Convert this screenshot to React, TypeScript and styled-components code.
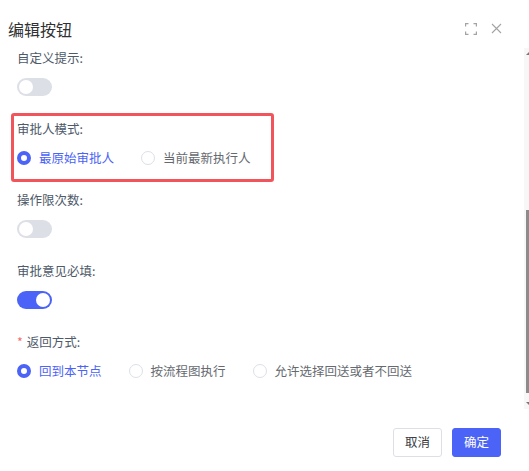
import React from "react";
import styled, { createGlobalStyle, css } from "styled-components";

const BLUE = "#4b63f6";

const Global = createGlobalStyle`
  html, body { margin: 0; padding: 0; background: #fff; }
  body { font-family: "Noto Sans CJK SC", "Noto Sans", sans-serif; }
  *, *::before, *::after { box-sizing: border-box; }
`;

const Dialog = styled.div`
  width: 529px;
  height: 471px;
  display: flex;
  flex-direction: column;
  background: #fff;
  overflow: hidden;
`;

const Header = styled.div`
  height: 48px;
  flex: none;
  display: flex;
  align-items: center;
  justify-content: space-between;
  padding: 9px 27px 0 8px;
`;

const Title = styled.h2`
  margin: 0;
  font-size: 16px;
  font-weight: 400;
  line-height: 20px;
  color: #303133;
`;

const HeaderTools = styled.div`
  display: flex;
  align-items: center;
  gap: 14px;
`;

const ToolButton = styled.span`
  display: inline-flex;
  color: #a3a3a3;
`;

const Body = styled.div`
  position: relative;
  height: 361px;
  flex: none;
  overflow: hidden;
`;

const Content = styled.div`
  padding: 0 0 0 17px;
`;

const ScrollTrack = styled.div`
  position: absolute;
  top: 0;
  right: 0;
  bottom: 0;
  width: 5px;
  background: #f7f7f7;
`;

const ScrollThumb = styled.div`
  position: absolute;
  right: 0;
  top: 162px;
  width: 3px;
  height: 183px;
  background: #8c8c8c;
`;

const ScrollArrow = styled.div<{ $down?: boolean }>`
  position: absolute;
  right: 0;
  width: 0;
  height: 0;
  border-left: 3px solid transparent;
  ${(p) =>
    p.$down
      ? css`
          bottom: 4px;
          border-top: 3px solid #777;
        `
      : css`
          top: 4px;
          border-bottom: 3px solid #777;
        `}
`;

const Item = styled.div<{ $marked?: boolean }>`
  position: relative;
  margin-bottom: 22px;
  ${(p) =>
    p.$marked &&
    css`
      &::after {
        content: "";
        position: absolute;
        left: -6px;
        top: -6px;
        width: 263px;
        height: 69px;
        border: 3px solid #f2545b;
        border-radius: 3px;
        pointer-events: none;
      }
    `}
`;

const Label = styled.div`
  font-size: 12.5px;
  line-height: 20px;
  height: 20px;
  color: #4e5969;
  margin-bottom: 9px;
  white-space: nowrap;
`;

const Required = styled.span`
  color: #f56c6c;
  margin-right: 4px;
`;

const Control = styled.div`
  height: 20px;
  display: flex;
  align-items: center;
`;

const SwitchTrack = styled.span<{ $on?: boolean }>`
  position: relative;
  display: inline-block;
  width: 35px;
  height: 18px;
  border-radius: 9px;
  background: ${(p) => (p.$on ? BLUE : "#dcdfe6")};
  &::after {
    content: "";
    position: absolute;
    top: 2px;
    left: ${(p) => (p.$on ? "19px" : "2px")};
    width: 14px;
    height: 14px;
    border-radius: 50%;
    background: #fff;
  }
`;

const RadioGroup = styled.div`
  display: flex;
  align-items: center;
`;

const RadioOption = styled.label<{ $checked?: boolean }>`
  display: flex;
  align-items: center;
  gap: 8px;
  margin-right: 27px;
  font-size: 12.5px;
  line-height: 20px;
  color: ${(p) => (p.$checked ? BLUE : "#666a70")};
  white-space: nowrap;
`;

const RadioDot = styled.span<{ $checked?: boolean }>`
  width: 14px;
  height: 14px;
  border-radius: 50%;
  flex: none;
  background: #fff;
  border: ${(p) => (p.$checked ? `4.5px solid ${BLUE}` : "1px solid #dcdfe6")};
`;

const Footer = styled.div`
  flex: none;
  display: flex;
  justify-content: flex-end;
  gap: 10px;
  padding: 19px 28px 0 0;
`;

const Button = styled.button<{ $primary?: boolean }>`
  height: 29px;
  padding: 0 11px;
  border-radius: 3px;
  font-family: inherit;
  font-size: 12.5px;
  line-height: 1;
  cursor: pointer;
  border: 1px solid ${(p) => (p.$primary ? BLUE : "#dcdfe6")};
  background: ${(p) => (p.$primary ? BLUE : "#fff")};
  color: ${(p) => (p.$primary ? "#fff" : "#3a3d42")};
`;

function Switch({ on }: { on?: boolean }) {
  return <SwitchTrack $on={on} />;
}

function Radios({ options, value }: { options: string[]; value: number }) {
  return (
    <RadioGroup>
      {options.map((o, i) => (
        <RadioOption key={o} $checked={i === value}>
          <RadioDot $checked={i === value} />
          {o}
        </RadioOption>
      ))}
    </RadioGroup>
  );
}

function FullscreenIcon() {
  return (
    <svg width="12" height="12" viewBox="0 0 12 12" fill="none" stroke="currentColor" strokeWidth="1.2">
      <path d="M0.6 3.5V0.6h2.9M8.5 0.6h2.9v2.9M11.4 8.5v2.9H8.5M3.5 11.4H0.6V8.5" />
    </svg>
  );
}

function CloseIcon() {
  return (
    <svg width="11" height="11" viewBox="0 0 11 11" fill="none" stroke="currentColor" strokeWidth="1.1">
      <path d="M1 1l9 9M10 1l-9 9" />
    </svg>
  );
}

export default function App() {
  return (
    <>
      <Global />
      <Dialog>
        <Header>
          <Title>编辑按钮</Title>
          <HeaderTools>
            <ToolButton>
              <FullscreenIcon />
            </ToolButton>
            <ToolButton>
              <CloseIcon />
            </ToolButton>
          </HeaderTools>
        </Header>
        <Body>
          <Content>
            <Item>
              <Label>自定义提示:</Label>
              <Control>
                <Switch />
              </Control>
            </Item>
            <Item $marked>
              <Label>审批人模式:</Label>
              <Control>
                <Radios options={["最原始审批人", "当前最新执行人"]} value={0} />
              </Control>
            </Item>
            <Item>
              <Label>操作限次数:</Label>
              <Control>
                <Switch />
              </Control>
            </Item>
            <Item>
              <Label>审批意见必填:</Label>
              <Control>
                <Switch on />
              </Control>
            </Item>
            <Item>
              <Label>
                <Required>*</Required>返回方式:
              </Label>
              <Control>
                <Radios options={["回到本节点", "按流程图执行", "允许选择回送或者不回送"]} value={0} />
              </Control>
            </Item>
          </Content>
          <ScrollTrack>
            <ScrollArrow />
            <ScrollThumb />
            <ScrollArrow $down />
          </ScrollTrack>
        </Body>
        <Footer>
          <Button>取消</Button>
          <Button $primary>确定</Button>
        </Footer>
      </Dialog>
    </>
  );
}
